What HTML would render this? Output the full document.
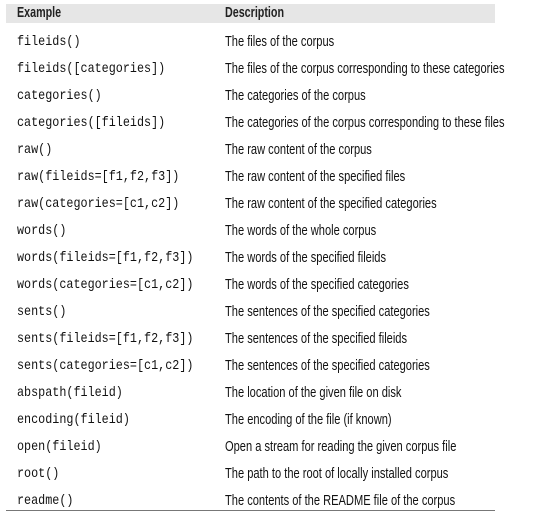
<!DOCTYPE html>
<html><head><style>
html,body{margin:0;padding:0;background:#fff;width:548px;height:516px;overflow:hidden}
.hdr{position:absolute;left:6px;top:4px;width:489px;height:19px;background:#e6e6e6}
.h{position:absolute;top:4px;font-family:"Liberation Sans",sans-serif;font-weight:bold;font-size:14.5px;color:#222;transform:scaleX(0.74);transform-origin:0 0;white-space:nowrap;line-height:18px}
.r{position:absolute;left:0;width:548px;height:20px}
.c{position:absolute;left:17px;font-family:"Liberation Mono",monospace;font-size:14px;color:#111;line-height:20px;white-space:nowrap;transform:scaleX(0.84);transform-origin:0 0}
.d{position:absolute;left:225px;font-family:"Liberation Sans",sans-serif;font-size:15px;color:#111;line-height:20px;white-space:nowrap;transform:scaleX(0.74);transform-origin:0 0}
.line{position:absolute;left:6px;top:510px;width:489px;height:1px;background:#777}
</style></head><body>
<div class="hdr"></div>
<div class="h" style="left:17px">Example</div>
<div class="h" style="left:225px">Description</div>
<div class="line"></div>
<div class="r" style="top:32px"><span class="c">fileids()</span><span class="d">The files of the corpus</span></div>
<div class="r" style="top:59px"><span class="c">fileids([categories])</span><span class="d">The files of the corpus corresponding to these categories</span></div>
<div class="r" style="top:86px"><span class="c">categories()</span><span class="d">The categories of the corpus</span></div>
<div class="r" style="top:113px"><span class="c">categories([fileids])</span><span class="d">The categories of the corpus corresponding to these files</span></div>
<div class="r" style="top:140px"><span class="c">raw()</span><span class="d">The raw content of the corpus</span></div>
<div class="r" style="top:167px"><span class="c">raw(fileids=[f1,f2,f3])</span><span class="d">The raw content of the specified files</span></div>
<div class="r" style="top:194px"><span class="c">raw(categories=[c1,c2])</span><span class="d">The raw content of the specified categories</span></div>
<div class="r" style="top:221px"><span class="c">words()</span><span class="d">The words of the whole corpus</span></div>
<div class="r" style="top:248px"><span class="c">words(fileids=[f1,f2,f3])</span><span class="d">The words of the specified fileids</span></div>
<div class="r" style="top:275px"><span class="c">words(categories=[c1,c2])</span><span class="d">The words of the specified categories</span></div>
<div class="r" style="top:302px"><span class="c">sents()</span><span class="d">The sentences of the specified categories</span></div>
<div class="r" style="top:329px"><span class="c">sents(fileids=[f1,f2,f3])</span><span class="d">The sentences of the specified fileids</span></div>
<div class="r" style="top:356px"><span class="c">sents(categories=[c1,c2])</span><span class="d">The sentences of the specified categories</span></div>
<div class="r" style="top:383px"><span class="c">abspath(fileid)</span><span class="d">The location of the given file on disk</span></div>
<div class="r" style="top:410px"><span class="c">encoding(fileid)</span><span class="d">The encoding of the file (if known)</span></div>
<div class="r" style="top:437px"><span class="c">open(fileid)</span><span class="d">Open a stream for reading the given corpus file</span></div>
<div class="r" style="top:464px"><span class="c">root()</span><span class="d">The path to the root of locally installed corpus</span></div>
<div class="r" style="top:491px"><span class="c">readme()</span><span class="d">The contents of the README file of the corpus</span></div>
</body></html>
